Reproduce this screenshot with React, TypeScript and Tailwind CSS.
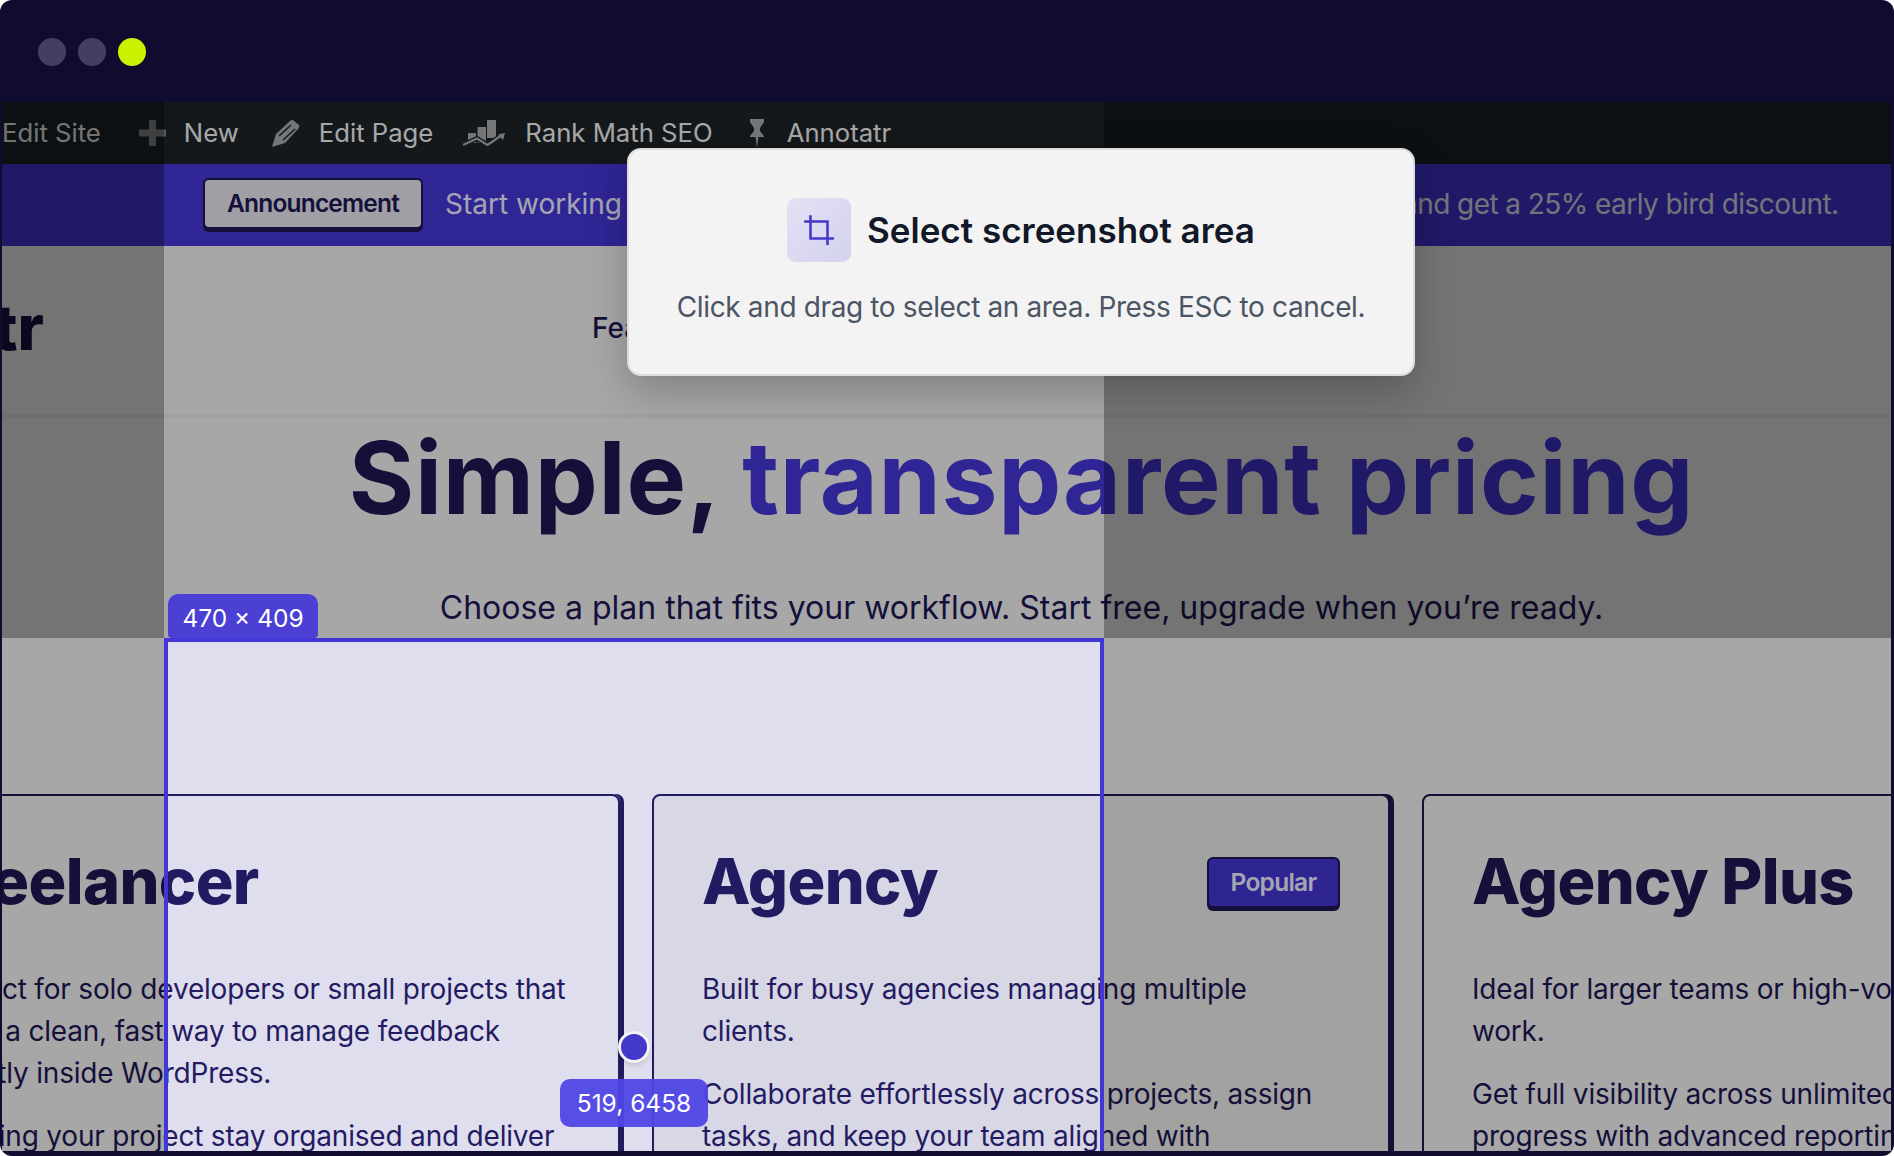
const cards = [
  {
    name: 'Freelancer',
    lines: [
      'Perfect for solo developers or small projects that',
      'need a clean, fast way to manage feedback',
      'directly inside WordPress.',
    ],
    more: ['Keeping your project stay organised and deliver'],
  },
  {
    name: 'Agency',
    lines: ['Built for busy agencies managing multiple', 'clients.'],
    more: ['Collaborate effortlessly across projects, assign', 'tasks, and keep your team aligned with'],
    popular: true,
  },
  {
    name: 'Agency Plus',
    lines: ['Ideal for larger teams or high-volume client', 'work.'],
    more: ['Get full visibility across unlimited sites and track', 'progress with advanced reporting'],
  },
]

function PencilIcon() {
  return (
    <svg width="28" height="28" viewBox="0 0 28 28" className="shrink-0">
      <path d="M0 28 L4 15 L18 2 Q20 0 22 2 L27 6 Q28 8 26 10 L13 24 Z" fill="#a7aaad" />
      <path d="M7 17 L19 6 M11 21 L23 10" stroke="#1d2327" strokeWidth="1.6" />
    </svg>
  )
}

function RankIcon() {
  return (
    <svg width="42" height="26" viewBox="0 0 42 26" className="shrink-0">
      <path d="M5 13h8v10H5zM14.5 7h8.500v16h-8.500zM24 0h9v18h-9z" fill="#a7aaad" />
      <path d="M0 25 L14 18.500 L24.500 25 L39 15" fill="none" stroke="#1d2327" strokeWidth="5" />
      <path d="M0 25 L14 18.500 L24.500 25 L39 15" fill="none" stroke="#a7aaad" strokeWidth="2.200" />
      <path d="M35 14.500 L42 13 L40 20 Z" fill="#a7aaad" />
    </svg>
  )
}

function PinIcon() {
  return (
    <svg width="16" height="29" viewBox="0 0 16 29" className="shrink-0">
      <path d="M1 0H15V3L11 9V12L15 17V18H9.500L8 29L6.500 18H1V17L5 12V9L1 3Z" fill="#a7aaad" />
    </svg>
  )
}

function PlusIcon() {
  return (
    <svg width="27" height="26" viewBox="0 0 27 26" className="shrink-0">
      <path d="M10 0h7v9.500h10v7H17V26h-7V16.500H0v-7h10z" fill="#7f8387" />
    </svg>
  )
}

function CropIcon() {
  return (
    <svg width="34" height="34" viewBox="0 0 24 24" fill="none" stroke="#4338ca" strokeWidth="1.800">
      <path d="M6 1.500V18H22.500" />
      <path d="M18 22.500V6H1.500" />
    </svg>
  )
}

export default function App() {
  return (
    <div className="w-[1894px] h-[1156px] bg-white overflow-hidden font-['Inter',sans-serif]">
      <div className="flex flex-col h-full rounded-xl overflow-hidden bg-[#100c30] pt-[2px] pl-[2px] pr-[3px] pb-[5px]">
        {/* Window chrome */}
        <div className="h-[100px] shrink-0 flex items-center gap-3 pl-9">
          <span className="w-7 h-7 rounded-full bg-[#443f60]" />
          <span className="w-7 h-7 rounded-full bg-[#443f60]" />
          <span className="w-7 h-7 rounded-full bg-[#cbf200]" />
        </div>

        <div className="relative flex-1 overflow-hidden bg-[#f0f0f0]">
          {/* Admin bar */}
          <div className="h-[62px] bg-[#1d2327] flex items-center gap-[36px] text-[25.700px] leading-none text-[#f0f0f1] whitespace-nowrap">
            <span>Edit Site</span>
            <span className="flex items-center gap-[18px] ml-[2px]"><PlusIcon />New</span>
            <span className="flex items-center gap-[19px] -ml-[3px]"><PencilIcon />Edit Page</span>
            <span className="flex items-center gap-[20px] -ml-[6px]"><RankIcon />Rank Math SEO</span>
            <span className="flex items-center gap-[22px]"><PinIcon />Annotatr</span>
          </div>

          {/* Announcement */}
          <div className="h-[82px] bg-[#4436d6] flex items-center pl-[201px] gap-[22px] whitespace-nowrap">
            <span className="h-[51px] w-[220px] -mt-[3px] flex items-center justify-center rounded-md border-2 border-[#1e1754] bg-[#e5e4ec] shadow-[0_3px_0_#1e1754] text-[24.500px] font-semibold tracking-[-0.033em] text-[#1e1754]">
              Announcement
            </span>
            <span className="-mt-[2px] text-[28px] text-[#ededff] tracking-[-0.02em]">
              <span className="tracking-normal">Start working</span>
              <span className="tracking-[-0.034em]"> with Annotatr now. Join the early access waitlist before launch </span>
              and get a 25% early bird discount.
            </span>
          </div>

          {/* Site header */}
          <div className="h-[172px] border-b-4 border-[#e6e4ed] flex items-center whitespace-nowrap">
            <span className="w-[42px] flex justify-end overflow-hidden text-[63px] font-extrabold text-[#16103f] -mt-[6px]">
              Annotatr
            </span>
            <span className="ml-[548px] text-[28px] font-medium text-[#1e1754] -mt-[5px]">Features</span>
          </div>

          {/* Hero */}
          <div className="flex flex-col items-center whitespace-nowrap pl-[150px]">
            <h1 className="mt-[3px] text-[100px] leading-[114px] font-bold tracking-[0.0075em] text-[#1e1754]">
              Simple, <span className="text-[#4436d6]">transparent pricing</span>
            </h1>
            <p className="mt-[52px] text-[32px] leading-[42px] text-[#1e1754]">
              Choose a plan that fits your workflow. Start free, upgrade when you’re ready.
            </p>
          </div>

          {/* Pricing cards */}
          <div className="flex gap-[32px] -ml-[120px] mt-[165px]">
            {cards.map((c) => (
              <div
                key={c.name}
                className={`w-[738px] shrink-0 h-[500px] rounded-lg border-2 border-[#1e1754] shadow-[4px_0_0_#1e1754] p-[48px] text-[#1e1754] ${
                  c.popular ? 'bg-[#e8e8e6]' : ''
                }`}
              >
                <div className="flex items-center justify-between h-[76px] mb-[48px]">
                  <h3 className="-mt-[2px] text-[63px] font-extrabold tracking-[-0.01em] whitespace-nowrap">{c.name}</h3>
                  {c.popular && (
                    <span className="h-[51px] w-[133px] flex items-center justify-center rounded-md border-2 border-[#1e1754] bg-[#4234d2] shadow-[0_3px_0_#1e1754] text-[24.500px] font-semibold tracking-[-0.03em] text-[#ededff]">
                      Popular
                    </span>
                  )}
                </div>
                <p className="text-[28px] leading-[42px] tracking-[-0.007em] whitespace-nowrap mb-[21px]">
                  {c.lines.map((l) => (
                    <span key={l} className="block">{l}</span>
                  ))}
                </p>
                <p className="text-[28px] leading-[42px] tracking-[-0.007em] whitespace-nowrap">
                  {c.more.map((l) => (
                    <span key={l} className="block">{l}</span>
                  ))}
                </p>
              </div>
            ))}
          </div>

          {/* Screenshot overlay: four panels round the selection */}
          <div className="absolute left-0 right-0 top-0 h-[536px] bg-black/30" />
          <div className="absolute left-0 top-0 bottom-0 w-[162px] bg-black/30" />
          <div className="absolute left-[1102px] right-0 top-0 bottom-0 bg-black/30" />

          {/* Selection */}
          <div className="absolute left-[162px] top-[536px] w-[940px] h-[818px] border-4 border-[#4236d6] bg-[#4f46e5]/10" />
          <div className="absolute left-[166px] top-[492px] h-[44px] w-[150px] pt-[4px] flex items-center justify-center rounded-t-[10px] rounded-b-sm bg-[#4c40d4] text-[24.500px] text-white">
            470 × 409
          </div>
          <div className="absolute left-[616px] top-[929px] w-[32px] h-[32px] rounded-full bg-[#4338ca] border-[3px] border-[#f3f3f3] shadow-md" />
          <div className="absolute left-[558px] top-[977px] h-[48px] w-[148px] flex items-center justify-center rounded-[10px] bg-[#4f46e5]/95 text-[24.500px] text-white">
            519, 6458
          </div>

          {/* Instruction popup */}
          <div className="absolute left-[625px] top-[46px] w-[788px] h-[228px] flex flex-col items-center rounded-[14px] border-2 border-[#dcdcdc] bg-[#f3f3f3] shadow-[0_16px_40px_rgba(0,0,0,0.22)]">
            <div className="flex items-center gap-4 mt-[48px]">
              <span className="w-16 h-16 flex items-center justify-center rounded-[9px] bg-gradient-to-br from-[#e2e1f4] to-[#d4d2ee]">
                <CropIcon />
              </span>
              <span className="text-[35px] font-semibold text-[#111827]">Select screenshot area</span>
            </div>
            <p className="mt-[24px] text-[28px] leading-[42px] tracking-[-0.013em] text-[#4b5563] whitespace-nowrap">
              Click and drag to select an area. Press ESC to cancel.
            </p>
          </div>
        </div>
      </div>
    </div>
  )
}
